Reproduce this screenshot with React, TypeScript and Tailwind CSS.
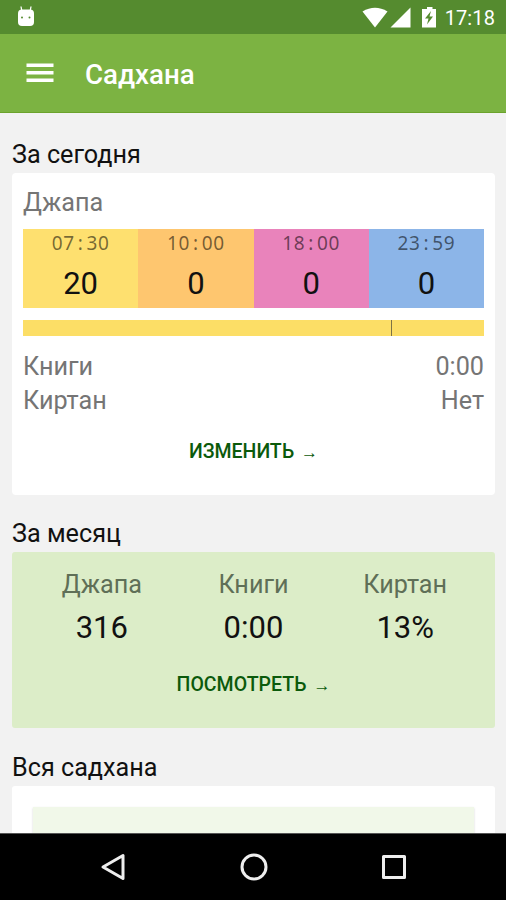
import type { ReactNode } from "react";

const slots = [
  { time: "07:30", count: 20, color: "bg-[#fee06f]" },
  { time: "10:00", count: 0, color: "bg-[#fec66f]" },
  { time: "18:00", count: 0, color: "bg-[#e983bb]" },
  { time: "23:59", count: 0, color: "bg-[#8cb5e8]" },
];

const month = [
  { label: "Джапа", value: "316" },
  { label: "Книги", value: "0:00" },
  { label: "Киртан", value: "13%" },
];

function StatusBar() {
  return (
    <div className="flex h-[34px] shrink-0 items-center bg-[#558b2f] text-white">
      <svg className="ml-[17px]" width="18" height="22" viewBox="0 0 18 22" fill="white">
        <path d="M4 0.500 5 6M14 0.500 13 6" stroke="white" strokeWidth="1.300" />
        <rect x="1" y="3.500" width="16" height="16.500" rx="4" />
        <circle cx="5" cy="11.500" r="1" fill="#558b2f" />
        <circle cx="12.500" cy="11.500" r="1" fill="#558b2f" />
      </svg>
      <div className="ml-auto flex items-center pr-[11px]">
        <svg width="84" height="24" viewBox="0 0 84 24" fill="white">
          <path d="M1.500 6.500Q14 -1 26.500 6.500L14 22.500Z" />
          <path d="M49.500 2.500V22.500H29.500Z" />
          <path d="M63 4h3V2h5.500v2H75v18.500H61V4z" />
          <path d="M70 6 64 13.500h3.500L66 19.500l6-8h-3.500z" fill="#558b2f" />
        </svg>
        <span className="pt-px text-[20px] leading-6 tracking-[0.1px]">17:18</span>
      </div>
    </div>
  );
}

function AppBar() {
  return (
    <div className="flex h-[79px] shrink-0 items-center border-b border-[#6ba32c] bg-[#7cb342]">
      <svg className="ml-[26px]" width="28" height="20" fill="white">
        <rect x="0.500" y="0.500" width="27" height="3.500" />
        <rect x="0.500" y="8" width="27" height="3.500" />
        <rect x="0.500" y="15.500" width="27" height="3.500" />
      </svg>
      <h1 className="ml-[31px] pt-1 text-[27.700px] leading-8 font-medium text-white">Садхана</h1>
    </div>
  );
}

function SectionTitle({ children }: { children: ReactNode }) {
  return <h2 className="h-[38px] text-[25.200px] leading-10 text-[#111]">{children}</h2>;
}

function Time({ value }: { value: string }) {
  const [h, m] = value.split(":");
  return (
    <div className="flex justify-center font-['Noto_Sans'] text-[19px] leading-[28px] tracking-[0.7px] text-black/55">
      <span>{h}</span>
      <span className="w-[11.5px] text-center">:</span>
      <span>{m}</span>
    </div>
  );
}

function CardLink({ children }: { children: ReactNode }) {
  return (
    <a className="flex justify-center text-[19.500px] leading-[24px] font-medium text-[#0b5a0b]">
      {children}
      <span className="ml-[7px] font-['Noto_Sans'] text-[17px] font-normal">→</span>
    </a>
  );
}

function Today() {
  return (
    <section className="h-[322px] rounded bg-white px-[11px]">
      <h3 className="pt-[13px] text-[25.200px] leading-[34px] text-[#757575]">Джапа</h3>
      <div className="mt-[9px] grid h-[79px] grid-cols-4 text-center">
        {slots.map((s) => (
          <div key={s.time} className={s.color}>
            <Time value={s.time} />
            <div className="pt-[3px] text-[31px] leading-12 text-[#111]">{s.count}</div>
          </div>
        ))}
      </div>
      <div className="mt-3 flex h-4 bg-[#fcde66]">
        <div className="ml-[368px] w-px bg-[#7d7345]" />
      </div>
      <dl className="mt-[14px] text-[25.200px] leading-[34px] text-[#757575]">
        <div className="flex justify-between">
          <dt>Книги</dt>
          <dd>0:00</dd>
        </div>
        <div className="flex justify-between">
          <dt>Киртан</dt>
          <dd>Нет</dd>
        </div>
      </dl>
      <div className="pt-[22px]">
        <CardLink>ИЗМЕНИТЬ</CardLink>
      </div>
    </section>
  );
}

function Month() {
  return (
    <section className="h-[176px] rounded-[3px] bg-[#dcedc8] px-[14px] pt-4">
      <div className="grid grid-cols-3 text-center">
        {month.map((m) => (
          <div key={m.label}>
            <div className="text-[25.200px] leading-[34px] text-[#5f6f57]">{m.label}</div>
            <div className="text-[31px] leading-[52px] text-[#111]">{m.value}</div>
          </div>
        ))}
      </div>
      <div className="pt-[19px]">
        <CardLink>ПОСМОТРЕТЬ</CardLink>
      </div>
    </section>
  );
}

function NavBar() {
  return (
    <nav className="flex h-[67px] shrink-0 items-center justify-between border-t border-[#555] bg-black pr-[98px] pl-[99px]">
      <svg width="28" height="30" fill="none" stroke="#eee" strokeWidth="3" strokeLinejoin="round">
        <path d="M24 3.500v23L4 15z" />
      </svg>
      <svg width="28" height="30" fill="none" stroke="#eee" strokeWidth="3">
        <circle cx="14" cy="15" r="12" />
      </svg>
      <svg width="28" height="30" fill="none" stroke="#eee" strokeWidth="3" strokeLinejoin="round">
        <rect x="3.500" y="4.500" width="21" height="21" />
      </svg>
    </nav>
  );
}

export default function App() {
  return (
    <div className="flex h-screen w-full flex-col overflow-hidden bg-[#f2f2f2] font-[Roboto,sans-serif]">
      <StatusBar />
      <AppBar />
      <main className="min-h-0 flex-1 overflow-hidden pt-[22px] pr-[11px] pl-3">
        <SectionTitle>За сегодня</SectionTitle>
        <Today />
        <div className="mt-[19px]">
          <SectionTitle>За месяц</SectionTitle>
        </div>
        <Month />
        <div className="mt-5">
          <SectionTitle>Вся садхана</SectionTitle>
        </div>
        <section className="h-[200px] rounded-t-[3px] bg-white px-[21px] pt-[21px]">
          <div className="h-[160px] bg-[#f1f8e9] shadow-[0_1px_2px_#d5d5d5]" />
        </section>
      </main>
      <NavBar />
    </div>
  );
}
